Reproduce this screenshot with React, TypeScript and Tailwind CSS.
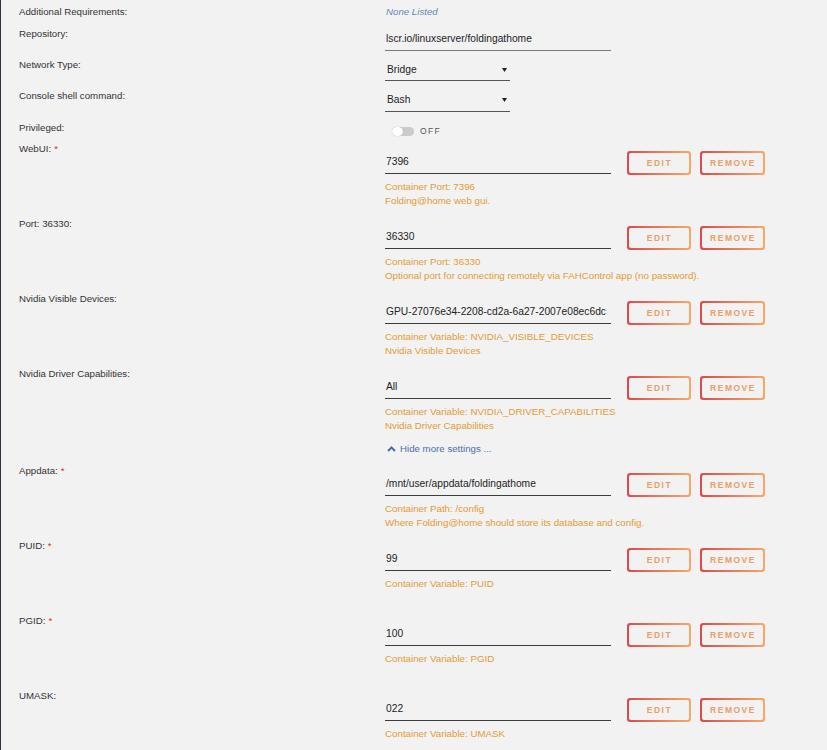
import React from "react";

const FONT = { fontFamily: '"Liberation Sans", Arial, sans-serif' };

function Btn({ children }: { children: React.ReactNode }) {
  return (
    <div className="h-[24px] rounded-[3px] p-[2px] bg-[linear-gradient(90deg,#dc4a4c,#f4aa6a)]">
      <div className="h-full w-full rounded-[2px] bg-[#f2f2f2] flex items-center justify-center pl-[1px] text-[8.5px] font-bold tracking-[1.5px] text-[#ee9c66]">
        {children}
      </div>
    </div>
  );
}

function Config({
  label,
  required,
  value,
  desc,
}: {
  label: string;
  required?: boolean;
  value: string;
  desc: string[];
}) {
  return (
    <div className="flex h-[75px]">
      <div className="w-[384px] pl-[18px] pt-[1px] text-[9.7px] leading-[14px] text-[#333]">
        {label}
        {required && <span className="text-[#e22828] ml-[3px]">*</span>}
      </div>
      <div className="pt-[10px]">
        <div className="flex items-start h-[24px]">
          <div className="w-[226px] h-[23px] border-b border-[#3d3d3d] pt-[4px] pl-[1px] text-[10.25px] leading-[14px] text-[#222]">
            {value}
          </div>
          <div className="ml-[16px] w-[64px]">
            <Btn>EDIT</Btn>
          </div>
          <div className="ml-[9px] w-[65px]">
            <Btn>REMOVE</Btn>
          </div>
        </div>
        <div className="mt-[5px] text-[9.75px] leading-[14px] text-[#e39b35]">
          {desc.map((d, i) => (
            <div key={i}>{d}</div>
          ))}
        </div>
      </div>
    </div>
  );
}

function Caret() {
  return (
    <svg width="5" height="4" viewBox="0 0 5 4" className="mr-[3px]">
      <path d="M0 0 L5 0 L2.5 4 Z" fill="#222" />
    </svg>
  );
}

export default function App() {
  return (
    <div
      className="w-[827px] h-[750px] overflow-hidden bg-[#f2f2f2] border-l border-[#2a3240]"
      style={FONT}
    >
      {/* Additional Requirements */}
      <div className="flex h-[24px]">
        <div className="w-[384px] pl-[18px] pt-[5px] text-[9.7px] leading-[14px] text-[#333]">
          Additional Requirements:
        </div>
        <div className="pt-[5px] pl-[1px] text-[9.7px] leading-[14px] italic text-[#6b85b7]">
          None Listed
        </div>
      </div>
      {/* Repository */}
      <div className="flex h-[31px]">
        <div className="w-[384px] pl-[18px] pt-[3px] text-[9.7px] leading-[14px] text-[#333]">
          Repository:
        </div>
        <div className="mt-[3px] w-[226px] h-[24px] border-b border-[#7a7a7a] pt-[5px] pl-[1px] text-[10.25px] leading-[14px] text-[#222]">
          lscr.io/linuxserver/foldingathome
        </div>
      </div>
      {/* Network Type */}
      <div className="flex h-[31px]">
        <div className="w-[384px] pl-[18px] pt-[3px] text-[9.7px] leading-[14px] text-[#333]">
          Network Type:
        </div>
        <div className="mt-[2px] w-[125px] h-[24px] border-b border-[#555] pt-[6px] pl-[2px] flex items-start text-[10.25px] leading-[14px] text-[#222]">
          <span>Bridge</span>
          <div className="ml-auto pt-[5px]">
            <Caret />
          </div>
        </div>
      </div>
      {/* Console shell command */}
      <div className="flex h-[31px]">
        <div className="w-[384px] pl-[18px] pt-[3px] text-[9.7px] leading-[14px] text-[#333]">
          Console shell command:
        </div>
        <div className="mt-[1px] w-[125px] h-[25px] border-b border-[#555] pt-[6px] pl-[2px] flex items-start text-[10.25px] leading-[14px] text-[#222]">
          <span>Bash</span>
          <div className="ml-auto pt-[5px]">
            <Caret />
          </div>
        </div>
      </div>
      {/* Privileged */}
      <div className="flex h-[24px]">
        <div className="w-[384px] pl-[18px] pt-[4px] text-[9.7px] leading-[14px] text-[#333]">
          Privileged:
        </div>
        <div className="pt-[5px] pl-[7px] flex items-center">
          <div className="relative w-[22px] h-[9px] rounded-full bg-[#cbcbcb]">
            <div className="absolute left-0 top-0 w-[11px] h-[9px] rounded-full bg-white shadow-[0_0_1px_rgba(0,0,0,0.3)]" />
          </div>
          <span className="ml-[6px] text-[8.5px] tracking-[1.3px] text-[#555]">OFF</span>
        </div>
      </div>

      <Config
        label="WebUI:"
        required
        value="7396"
        desc={["Container Port: 7396", "Folding@home web gui."]}
      />
      <Config
        label="Port: 36330:"
        value="36330"
        desc={[
          "Container Port: 36330",
          "Optional port for connecting remotely via FAHControl app (no password).",
        ]}
      />
      <Config
        label="Nvidia Visible Devices:"
        value="GPU-27076e34-2208-cd2a-6a27-2007e08ec6dc"
        desc={["Container Variable: NVIDIA_VISIBLE_DEVICES", "Nvidia Visible Devices"]}
      />
      <Config
        label="Nvidia Driver Capabilities:"
        value="All"
        desc={["Container Variable: NVIDIA_DRIVER_CAPABILITIES", "Nvidia Driver Capabilities"]}
      />

      {/* Hide more settings */}
      <div className="flex h-[22px]">
        <div className="w-[384px]" />
        <div className="pt-[1px] pl-[2px] flex items-center h-[15px] text-[9.7px] leading-[14px] text-[#4e6ea8]">
          <svg width="9" height="6" viewBox="0 0 9 6" className="mr-[4px]">
            <path d="M1 5 L4.5 1.5 L8 5" fill="none" stroke="#4e6ea8" strokeWidth="2" />
          </svg>
          Hide more settings ...
        </div>
      </div>

      <Config
        label="Appdata:"
        required
        value="/mnt/user/appdata/foldingathome"
        desc={["Container Path: /config", "Where Folding@home should store its database and config."]}
      />
      <Config label="PUID:" required value="99" desc={["Container Variable: PUID"]} />
      <Config label="PGID:" required value="100" desc={["Container Variable: PGID"]} />
      <Config label="UMASK:" value="022" desc={["Container Variable: UMASK"]} />
    </div>
  );
}
